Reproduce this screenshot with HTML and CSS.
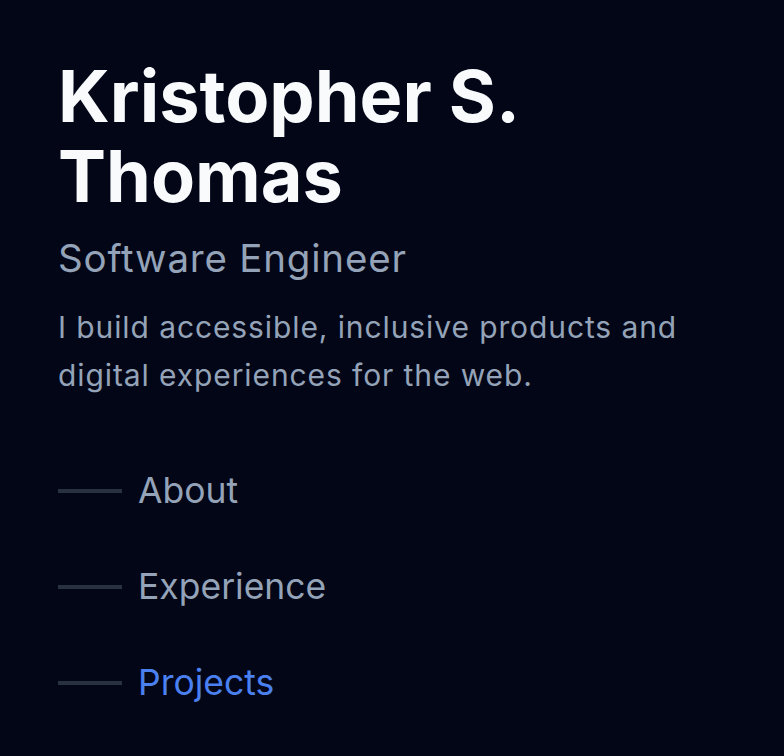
FILE: index.html
```html
<!DOCTYPE html>
<html>
<head>
<meta charset="utf-8">
<link rel="stylesheet" href="styles.css">
</head>
<body>
<header class="hero">
  <h1 class="name">Kristopher S. Thomas</h1>
  <h2 class="role">Software Engineer</h2>
  <p class="tagline">I build accessible, inclusive products and digital experiences for the web.</p>
  <nav class="nav">
    <a class="nav-item" href="#about"><span class="nav-line"></span><span class="nav-text">About</span></a>
    <a class="nav-item" href="#experience"><span class="nav-line"></span><span class="nav-text">Experience</span></a>
    <a class="nav-item active" href="#projects"><span class="nav-line"></span><span class="nav-text">Projects</span></a>
  </nav>
</header>
</body>
</html>
```
FILE: styles.css
```css
html, body {
  margin: 0;
  padding: 0;
  background: #020617;
  height: 100%;
}
body {
  font-family: Inter, "Noto Sans", sans-serif;
  color: #94a3b8;
  overflow: hidden;
}
.hero {
  padding: 56px 58px 0 58px;
  display: flex;
  flex-direction: column;
}
.name {
  margin: 0;
  font-size: 72px;
  line-height: 80px;
  font-weight: 700;
  letter-spacing: 0;
  color: #f8fafc;
  width: 540px;
}
.role {
  margin: 18px 0 0 0;
  font-size: 38.5px;
  line-height: 48px;
  font-weight: 400;
  letter-spacing: 0.8px;
  color: #94a3b8;
}
.tagline {
  margin: 21px 0 0 0;
  font-size: 30px;
  line-height: 48px;
  letter-spacing: 0.9px;
  color: #94a3b8;
  width: 660px;
}
.nav {
  margin-top: 68px;
  display: flex;
  flex-direction: column;
  gap: 48px;
}
.nav-item {
  display: flex;
  align-items: center;
  gap: 16px;
  text-decoration: none;
  color: #94a3b8;
  height: 48px;
}
.nav-line {
  width: 64px;
  height: 4px;
  background: #283140;
}
.nav-text {
  font-size: 35.5px;
  line-height: 48px;
  font-weight: 400;
}
.nav-item.active .nav-text {
  color: #4a80ef;
}
```
